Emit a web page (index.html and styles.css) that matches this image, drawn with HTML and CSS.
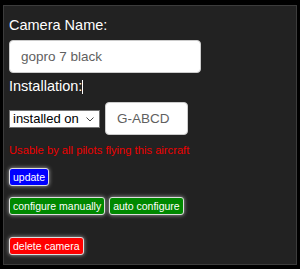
FILE: index.html
```html
<!DOCTYPE html>
<html lang="en">
<head>
<meta charset="UTF-8">
<title>Camera</title>
<link rel="stylesheet" href="styles.css">
</head>
<body>
  <div class="panel">
    <div class="label">Camera Name:</div>
    <input class="text-input name-input" type="text" value="gopro 7 black">
    <div class="label">Installation:<span class="caret"></span></div>
    <div class="install-row">
      <div class="select-wrap">
        <select class="install-select">
          <option>installed on</option>
        </select>
        <svg class="chevron" width="8" height="5" viewBox="0 0 8 5"><path d="M0.5 0.5 L4 4 L7.5 0.5" fill="none" stroke="#444" stroke-width="1"/></svg>
      </div>
      <input class="text-input reg-input" type="text" value="G-ABCD">
    </div>
    <div class="note">Usable by all pilots flying this aircraft</div>
    <div class="btn-row">
      <button class="btn btn-blue">update</button>
    </div>
    <div class="btn-row">
      <button class="btn btn-green">configure manually</button>
      <button class="btn btn-green">auto configure</button>
    </div>
    <div class="btn-row delete-row">
      <button class="btn btn-red">delete camera</button>
    </div>
  </div>
</body>
</html>
```

FILE: styles.css
```css
body {
  margin: 0;
  padding: 5px 3px;
  background: #000;
  font-family: "Liberation Sans", Arial, sans-serif;
}
.panel {
  box-sizing: border-box;
  width: 294px;
  height: 260px;
  background: #222;
  border: 1px solid #3c3c3c;
  padding: 11px 5px;
  color: #fff;
}
.label {
  font-size: 14.5px;
  line-height: 16px;
}
.caret {
  display: inline-block;
  width: 1px;
  height: 14px;
  background: #fff;
  vertical-align: -3px;
}
.text-input {
  box-sizing: border-box;
  height: 33px;
  padding: 0 11px;
  border: 1px solid #ccc;
  border-radius: 4px;
  background: #fff;
  color: #5f5f5f;
  font-family: inherit;
  font-size: 13.5px;
}
.name-input {
  display: block;
  width: 192px;
  margin: 7px 0 5px;
}
.install-row {
  display: flex;
  align-items: center;
  gap: 5px;
  margin-top: 8px;
}
.select-wrap {
  position: relative;
}
.install-select {
  display: block;
  box-sizing: border-box;
  -webkit-appearance: none;
  appearance: none;
  height: 18px;
  width: 91px;
  font-family: inherit;
  font-size: 13px;
  padding: 0 0 0 3px;
  border: 1px solid #767676;
  border-radius: 0;
  background: #fff;
  color: #000;
}
.chevron {
  position: absolute;
  right: 6px;
  top: 7px;
}
.reg-input {
  width: 83px;
}
.note {
  margin-top: 9px;
  color: #e00;
  font-size: 11.2px;
  line-height: 13px;
}
.btn-row {
  display: flex;
  gap: 4px;
  margin-top: 11px;
}
.delete-row {
  margin-top: 22px;
}
.btn {
  height: 18px;
  padding: 0 3px;
  border: 1px solid #ddd;
  border-radius: 3px;
  color: #fff;
  font-family: inherit;
  font-size: 10.5px;
  box-shadow: 0 0 4px rgba(255, 255, 255, 0.6);
  cursor: pointer;
}
.btn-blue {
  background: #00f;
}
.btn-green {
  background: #080;
}
.btn-red {
  background: #f00;
}
```
